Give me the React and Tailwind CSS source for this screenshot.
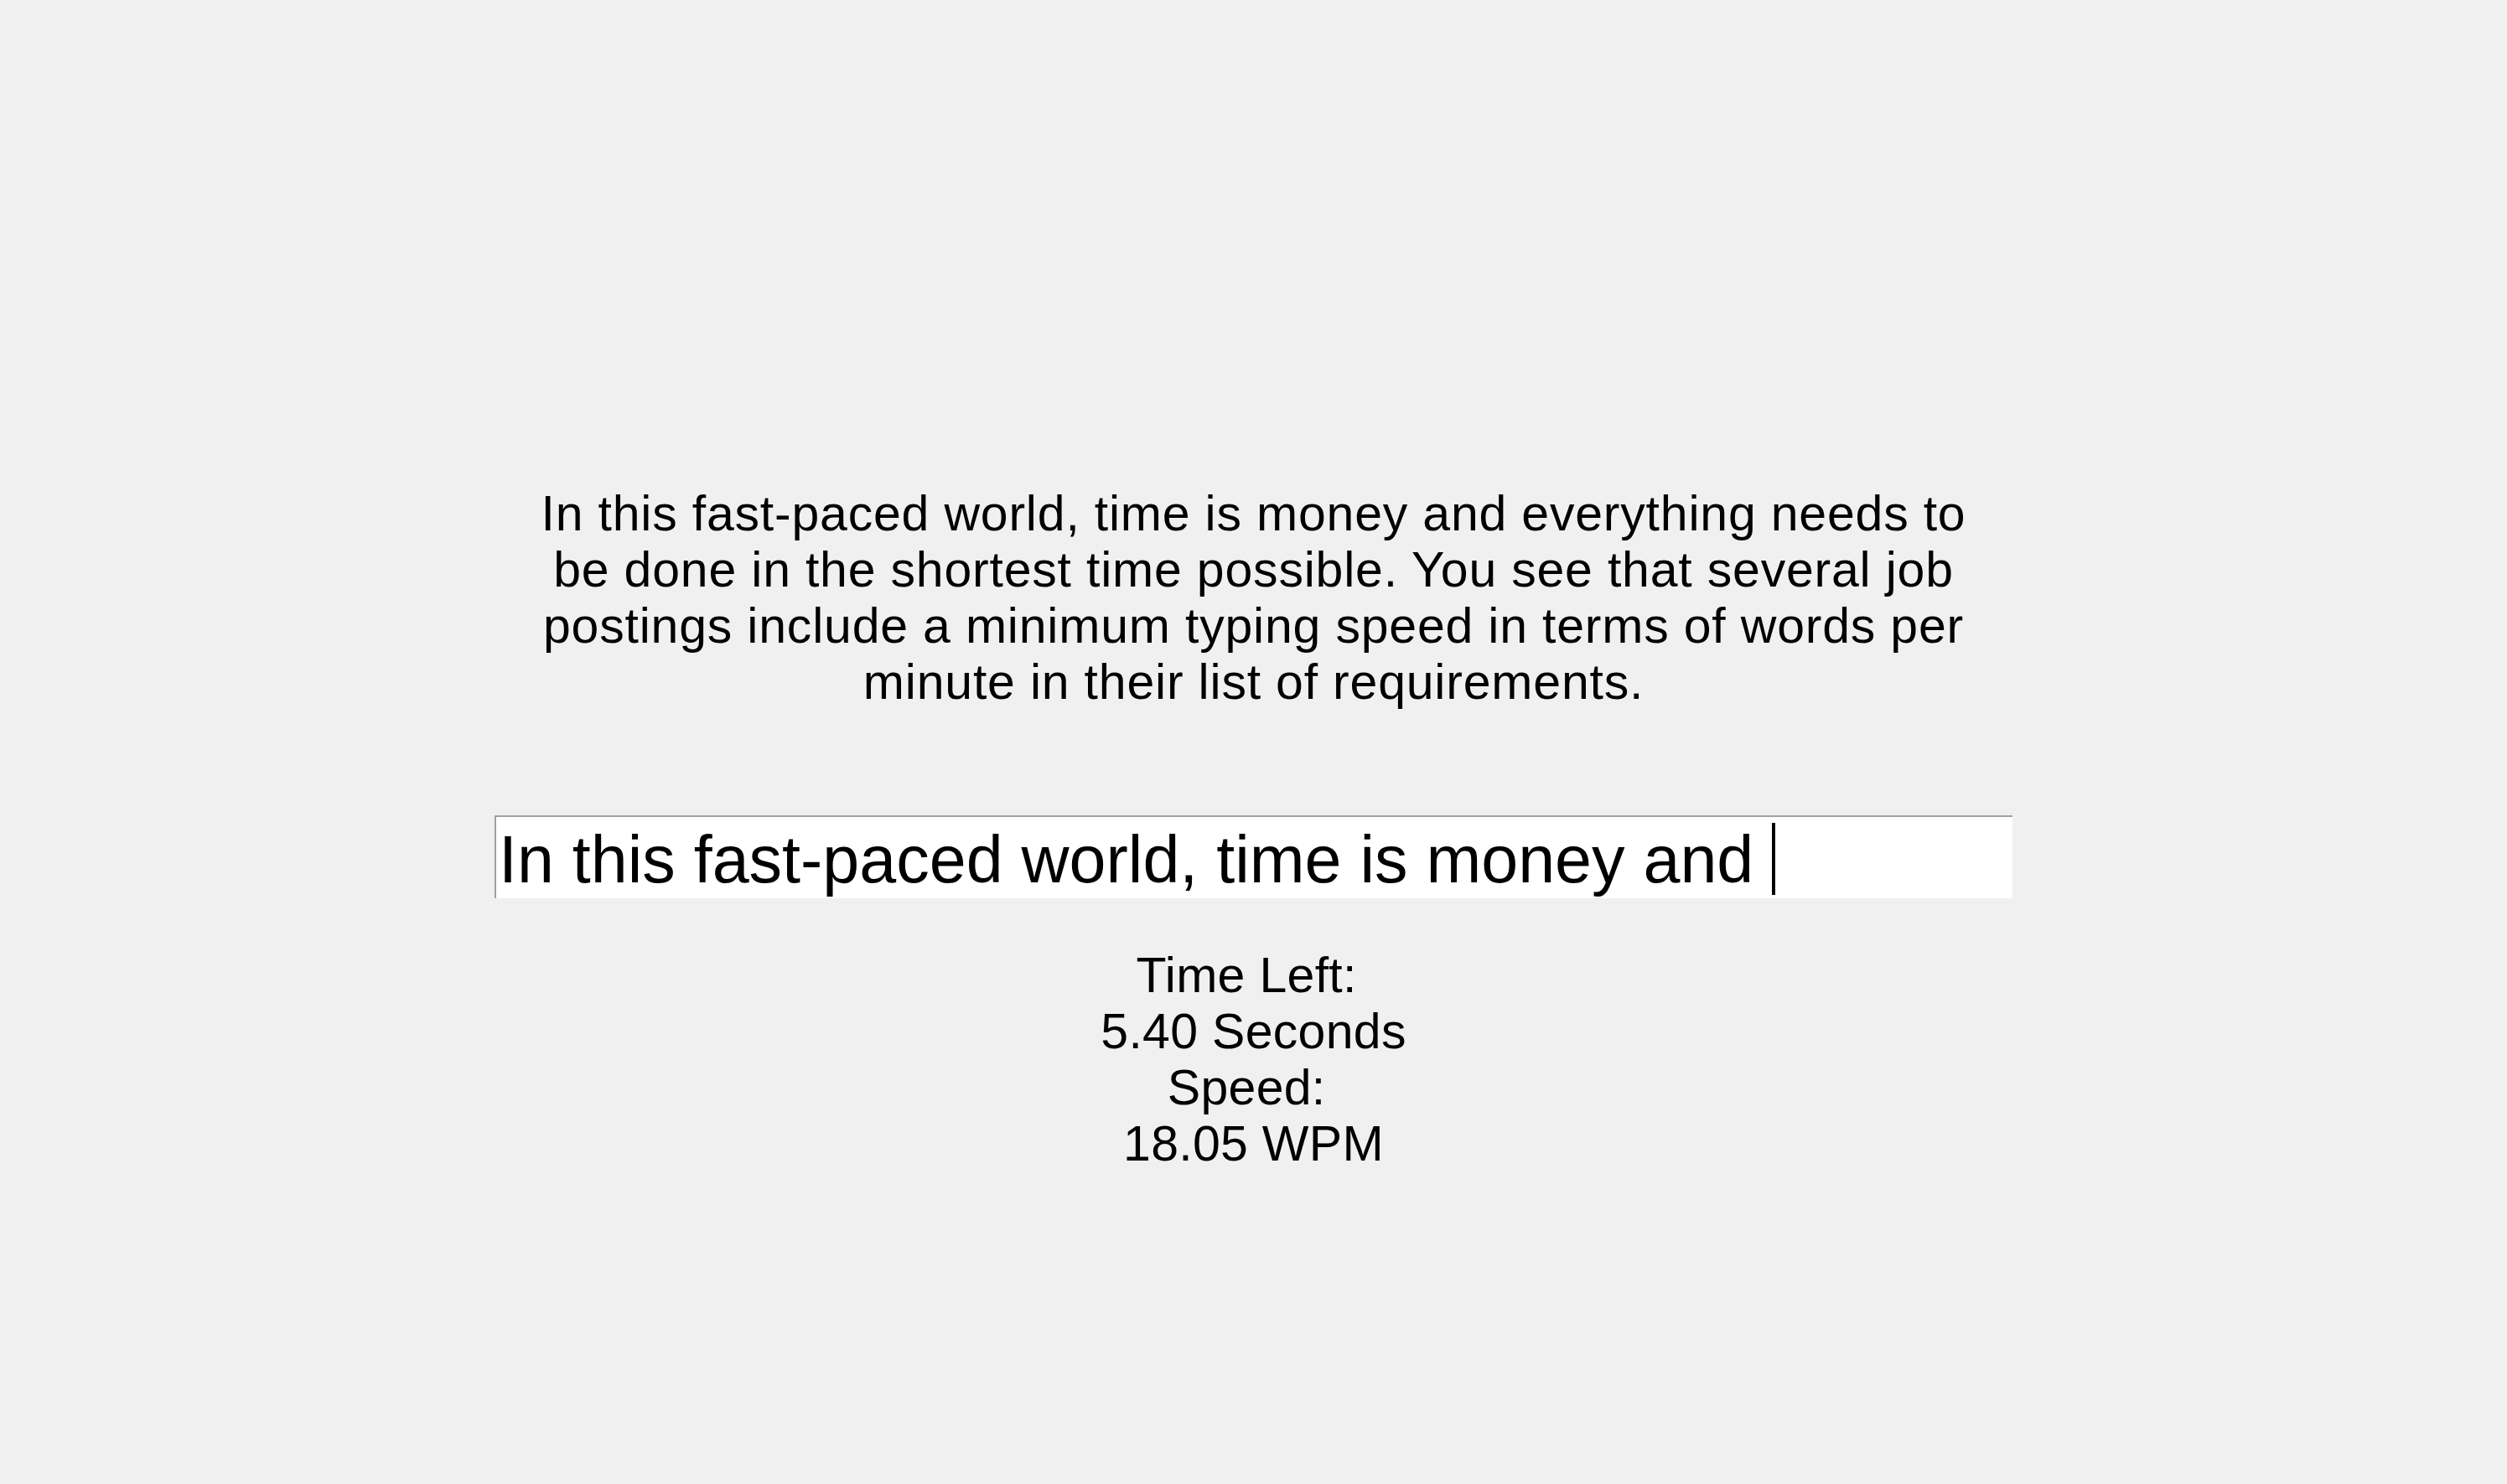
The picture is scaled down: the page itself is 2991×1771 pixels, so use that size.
const App = () => {
  const passage =
    'In this fast-paced world, time is money and everything needs to be done in the shortest time possible. You see that several job postings include a minimum typing speed in terms of words per minute in their list of requirements.'

  const typed = 'In this fast-paced world, time is money and '

  return (
    <div
      className="min-h-screen bg-[#f0f0f0] text-black flex flex-col items-center pt-[580px]"
      style={{ fontFamily: '"Liberation Sans", Arial, sans-serif' }}
    >
      {/* passage to type */}
      <p className="w-[1740px] text-center text-[59px] leading-[67px] tracking-[0.8px]">{passage}</p>

      {/* entry box */}
      <div className="mt-[125px] w-[1811px] h-[99px] bg-white border-t-2 border-l-2 border-[#a0a0a0] flex items-start pl-[3px]">
        <span className="whitespace-pre text-[79px] leading-[101px]">{typed}</span>
        <span className="mt-[7px] w-[4px] h-[86px] bg-black" />
      </div>

      {/* stats */}
      <div className="mt-[59px] whitespace-pre text-center text-[59px] leading-[67px] tracking-[0.3px]">
        {'Time Left: \n5.40 Seconds\nSpeed: \n18.05 WPM'}
      </div>
    </div>
  )
}

export default App
